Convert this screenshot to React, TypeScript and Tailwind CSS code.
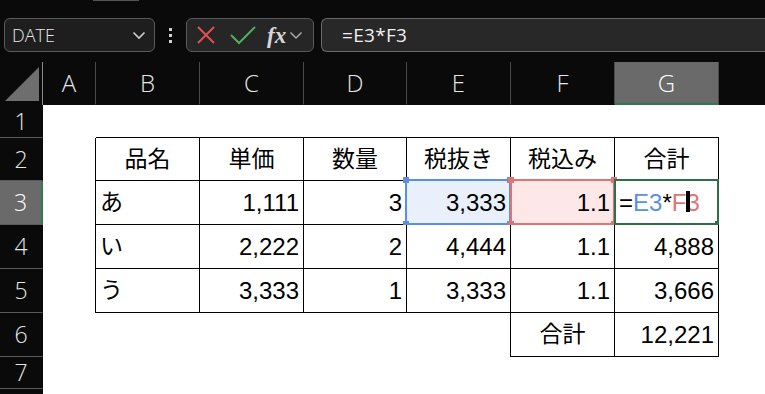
import React from "react";

const jp = { fontFamily: '"Liberation Sans", "Noto Sans CJK JP", sans-serif' };
const hdr = { fontFamily: '"Open Sans", "Noto Sans", sans-serif' };

const colW = "grid-cols-[43px_53px_104px_104px_103px_104px_104px_104px_1fr]";
const cols = ["A", "B", "C", "D", "E", "F", "G"];

function RowHead({ n, active }: { n: number; active?: boolean }) {
  return (
    <div
      className={`flex items-center justify-center border-b border-[#5a5a5a] text-[23px] font-light ${
        active ? "bg-[#6a6a6a] text-white border-r-2 border-r-[#2f7a4f]" : "bg-[#0a0a0a] text-[#e6e6e6] border-r border-r-[#0a0a0a]"
      }`}
      style={hdr}
    >
      {n}
    </div>
  );
}

function Cell({
  children,
  cls = "",
  align = "right",
}: {
  children?: React.ReactNode;
  cls?: string;
  align?: "left" | "right" | "center";
}) {
  const a =
    align === "left" ? "justify-start pl-[4px] text-[23px]" : align === "center" ? "justify-center text-[23px]" : "justify-end pr-[4px] text-[24px]";
  return (
    <div className={`relative flex items-center ${a} bg-white text-black ${cls}`} style={jp}>
      {children}
    </div>
  );
}

function Handles({ color }: { color: string }) {
  return (
    <>
      <div className={`absolute -left-[4px] -top-[4px] h-[6px] w-[6px] ${color}`} />
      <div className={`absolute -right-[4px] -top-[4px] h-[6px] w-[6px] ${color}`} />
      <div className={`absolute -left-[4px] -bottom-[4px] h-[6px] w-[6px] ${color}`} />
      <div className={`absolute -right-[4px] -bottom-[4px] h-[6px] w-[6px] ${color}`} />
    </>
  );
}

export default function App() {
  const tb = "border-r border-b border-black";
  return (
    <div className="w-[765px] h-[394px] overflow-hidden bg-[#0a0a0a] relative">
      <div className="absolute left-[93px] top-0 h-[1px] w-[46px] bg-[#555]" />
      {/* Toolbar */}
      <div className="h-[62px] flex items-start pt-[18px] pl-[4px]">
        <div className="w-[151px] h-[34px] rounded-[6px] border border-[#5a5a5a] bg-[#1e1e1e] flex items-center justify-between pl-[7px] pr-[8px]">
          <span className="text-[18px] text-[#e8e8e8] font-light" style={hdr}>
            DATE
          </span>
          <svg width="14" height="10" viewBox="0 0 14 10">
            <path d="M1.5 2.5 L7 8 L12.5 2.5" fill="none" stroke="#cfcfcf" strokeWidth="1.6" />
          </svg>
        </div>
        <div className="w-[31px] h-[34px] flex flex-col items-center justify-center gap-[3px]">
          <div className="w-[3px] h-[3px] bg-[#d0d0d0]" />
          <div className="w-[3px] h-[3px] bg-[#d0d0d0]" />
          <div className="w-[3px] h-[3px] bg-[#d0d0d0]" />
        </div>
        <div className="w-[128px] h-[34px] rounded-[6px] border border-[#5a5a5a] bg-[#262626] flex items-center pl-[9px]">
          <svg width="20" height="20" viewBox="0 0 20 20">
            <path d="M2 2 L18 18 M18 2 L2 18" stroke="#e05252" strokeWidth="2" />
          </svg>
          <svg width="28" height="22" viewBox="0 0 28 22" className="ml-[13px]">
            <path d="M2 11 L10 19 L26 3" fill="none" stroke="#4fae5f" strokeWidth="2" />
          </svg>
          <span
            className="ml-[10px] text-[23px] italic font-bold text-[#d6d6d6] leading-none"
            style={{ fontFamily: '"Liberation Serif", "DejaVu Serif", serif' }}
          >
            fx
          </span>
          <svg width="14" height="10" viewBox="0 0 14 10" className="ml-[3px]">
            <path d="M1.5 2.5 L7 8 L12.5 2.5" fill="none" stroke="#a8a8a8" strokeWidth="1.5" />
          </svg>
        </div>
        <div className="ml-[7px] flex-1 h-[34px] rounded-l-[6px] border border-r-0 border-[#6a6a6a] bg-[#282828] flex items-center pl-[20px]">
          <span className="text-[19px] text-[#f0f0f0] tracking-[0.3px]" style={hdr}>
            =E3*F3
          </span>
        </div>
      </div>

      {/* Sheet */}
      <div className={`grid ${colW} grid-rows-[43px_33px_43px_44px_44px_44px_44px_32px_1fr] h-[332px]`}>
        {/* header row */}
        <div className="relative bg-[#0a0a0a]">
          <svg width="43" height="43" viewBox="0 0 43 43" className="absolute left-0 top-0">
            <path d="M5 39 L39 5 L39 39 Z" fill="#6e6e6e" />
            <path d="M42.5 0 L42.5 43" stroke="#8a8a8a" strokeWidth="1" />
          </svg>
        </div>
        {cols.map((c) => (
          <div
            key={c}
            className={`flex items-center justify-center text-[24px] font-light border-r border-[#4a4a4a] ${
              c === "G" ? "bg-[#6a6a6a] text-white border-b-2 border-b-[#2f7a4f]" : "text-[#e6e6e6] border-b border-b-[#0a0a0a]"
            }`}
            style={hdr}
          >
            {c}
          </div>
        ))}
        <div className="bg-[#0a0a0a] border-b border-[#0a0a0a]" />

        {/* row 1 */}
        <RowHead n={1} />
        <Cell />
        {cols.slice(1).map((c) => (
          <Cell key={c} cls="border-b border-black" />
        ))}
        <Cell />

        {/* row 2 */}
        <RowHead n={2} />
        <Cell cls="border-r border-black" />
        <Cell cls={tb} align="center">品名</Cell>
        <Cell cls={tb} align="center">単価</Cell>
        <Cell cls={tb} align="center">数量</Cell>
        <Cell cls={tb} align="center">税抜き</Cell>
        <Cell cls={tb} align="center">税込み</Cell>
        <Cell cls={tb} align="center">合計</Cell>
        <Cell />

        {/* row 3 */}
        <RowHead n={3} active />
        <Cell cls="border-r border-black" />
        <Cell cls={tb} align="left">あ</Cell>
        <Cell cls={tb}>1,111</Cell>
        <Cell cls={tb}>3</Cell>
        <Cell cls={`${tb} !bg-[#e9f0fc]`}>
          <div className="absolute -left-[2px] -top-[2px] -right-[1px] -bottom-[1px] border-2 border-[#5b8fe6]">
            <Handles color="bg-[#5b8fe6]" />
          </div>
          <span className="relative">3,333</span>
        </Cell>
        <Cell cls={`${tb} !bg-[#fde7e7]`}>
          <div className="absolute -left-[1px] -top-[2px] -right-[1px] -bottom-[1px] border-2 border-[#e07474]">
            <Handles color="bg-[#e07474]" />
          </div>
          <span className="relative">1.1</span>
        </Cell>
        <Cell cls={`${tb} !text-[24px]`} align="left">
          <div className="absolute -left-[1px] -top-[2px] -right-[1px] -bottom-[1px] border-2 border-[#2f6e48]">
            <div className="absolute -right-[3px] -bottom-[3px] h-[5px] w-[5px] bg-[#2f6e48]" />
          </div>
          <span className="relative flex items-center">
            <span>=</span>
            <span className="text-[#5b8fe6]">E3</span>
            <span>*</span>
            <span className="text-[#e07474]">F</span>
            <span className="relative text-[#e07474]">
              <span className="absolute left-[0px] top-[6px] h-[21px] w-[4px] bg-black" />
              3
            </span>
          </span>
        </Cell>
        <Cell />

        {/* row 4 */}
        <RowHead n={4} />
        <Cell cls="border-r border-black" />
        <Cell cls={tb} align="left">い</Cell>
        <Cell cls={tb}>2,222</Cell>
        <Cell cls={tb}>2</Cell>
        <Cell cls={tb}>4,444</Cell>
        <Cell cls={tb}>1.1</Cell>
        <Cell cls={tb}>4,888</Cell>
        <Cell />

        {/* row 5 */}
        <RowHead n={5} />
        <Cell cls="border-r border-black" />
        <Cell cls={tb} align="left">う</Cell>
        <Cell cls={tb}>3,333</Cell>
        <Cell cls={tb}>1</Cell>
        <Cell cls={tb}>3,333</Cell>
        <Cell cls={tb}>1.1</Cell>
        <Cell cls={tb}>3,666</Cell>
        <Cell />

        {/* row 6 */}
        <RowHead n={6} />
        <Cell />
        <Cell />
        <Cell />
        <Cell />
        <Cell cls="border-r border-black" />
        <Cell cls={tb} align="center">合計</Cell>
        <Cell cls={tb}>12,221</Cell>
        <Cell />

        {/* row 7 */}
        <RowHead n={7} />
        {Array.from({ length: 8 }).map((_, i) => (
          <Cell key={i} />
        ))}

        {/* row 8 */}
        <RowHead n={8} />
        {Array.from({ length: 8 }).map((_, i) => (
          <Cell key={i} />
        ))}
      </div>
    </div>
  );
}
